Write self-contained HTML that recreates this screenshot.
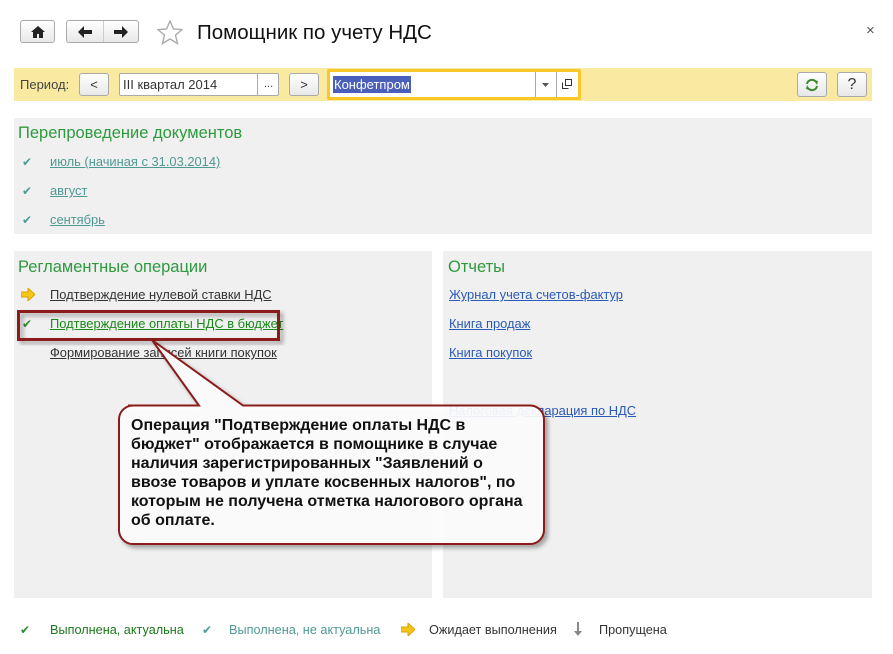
<!DOCTYPE html>
<html><head><meta charset="utf-8"><style>
*{margin:0;padding:0;box-sizing:border-box}
body{width:893px;height:654px;background:#fff;font-family:"Liberation Sans",Arial,sans-serif;position:relative;overflow:hidden;color:#333}
.a{position:absolute}
.btn{position:absolute;border:1px solid #aaa;border-radius:3px;background:linear-gradient(#fff,#e8e8e8);font-size:13px;text-align:center;color:#333}
.panel{position:absolute;background:#f0f0f0}
.h{position:absolute;font-size:16.5px;color:#2e9a3e}
.lnk{position:absolute;font-size:12.9px;text-decoration:underline;white-space:nowrap}
.gr{color:#4f9a94}
.f{font-size:12.7px;white-space:nowrap}
</style></head><body>
<div class="btn" style="left:20px;top:20px;width:35px;height:23px"><svg width="14" height="12" style="margin-top:5px" viewBox="0 0 14 12"><path d="M7 0L0 6h2v6h4V8h2v4h4V6h2z" fill="#222"/></svg></div>
<div class="btn" style="left:66px;top:20px;width:73px;height:23px"><div class="a" style="left:36px;top:0;width:1px;height:21px;background:#ccc"></div>
<svg class="a" style="left:11px;top:5px" width="14" height="12" viewBox="0 0 14 12"><path d="M0 6L6 0v4h8v4H6v4z" fill="#222"/></svg>
<svg class="a" style="left:47px;top:5px" width="14" height="12" viewBox="0 0 14 12"><path d="M14 6L8 0v4H0v4h8v4z" fill="#222"/></svg></div>
<svg class="a" style="left:157px;top:20px" width="26" height="25" viewBox="0 0 26 25"><path d="M13 1l3.5 8 8.5.6-6.5 5.5 2 8.4L13 19l-7.5 4.5 2-8.4L1 9.6 9.5 9z" fill="none" stroke="#aaa" stroke-width="1.4"/></svg>
<div class="a" style="left:197px;top:21px;font-size:20.5px;color:#111;white-space:nowrap">Помощник по учету НДС</div>
<div class="a" style="left:866px;top:22px;font-size:15px;color:#555">×</div>

<div class="a" style="left:14px;top:68px;width:858px;height:33px;background:#fae9a0"></div>
<div class="a" style="left:20px;top:77px;font-size:13px;color:#444">Период:</div>
<div class="btn" style="left:79px;top:73px;width:30px;height:23px;line-height:21px">&lt;</div>
<div class="a" style="left:119px;top:73px;width:160px;height:23px;background:#fff;border:1px solid #aaa;border-radius:2px;font-size:13px;padding:3px 3px;color:#333">III квартал 2014<div class="a" style="left:137px;top:0;width:1px;height:21px;background:#aaa"></div><div class="a" style="left:144px;top:4px;font-size:11px">...</div></div>
<div class="btn" style="left:289px;top:73px;width:30px;height:23px;line-height:21px">&gt;</div>
<div class="a" style="left:327px;top:69px;width:254px;height:31px;border:3px solid #f8c82a;background:#fff;border-radius:2px"></div>
<div class="a" style="left:333px;top:76px;height:17px;background:#4a5fba;color:#fff;font-size:13px;padding:1px 1px">Конфетпром</div>
<div class="a" style="left:535px;top:72px;width:1px;height:25px;background:#aaa"></div>
<div class="a" style="left:556px;top:72px;width:1px;height:25px;background:#aaa"></div>
<svg class="a" style="left:542px;top:83px" width="7" height="4"><path d="M0 0h7L3.5 4z" fill="#555"/></svg>
<svg class="a" style="left:562px;top:79px" width="10" height="10"><path d="M3.5.5h6v6h-6zM.5 3.5v6h6" fill="none" stroke="#333"/></svg>
<div class="btn" style="left:797px;top:72px;width:30px;height:25px"><svg width="16" height="16" style="margin-top:4px" viewBox="0 0 16 16"><path d="M3 7a5 5 0 0 1 9-2M13 9a5 5 0 0 1-9 2" fill="none" stroke="#3a8a2a" stroke-width="2"/><path d="M10 3l4 1-1 4zM6 13l-4-1 1-4z" fill="#3a8a2a"/></svg></div>
<div class="btn" style="left:837px;top:72px;width:30px;height:25px;line-height:23px;font-size:16px">?</div>

<div class="panel" style="left:14px;top:118px;width:858px;height:116px"></div>
<div class="h" style="left:18px;top:124px">Перепроведение документов</div>
<div class="a gr" style="left:22px;top:155px;font-size:12px">✔</div><div class="lnk gr" style="left:50px;top:154px">июль (начиная с 31.03.2014)</div>
<div class="a gr" style="left:22px;top:184px;font-size:12px">✔</div><div class="lnk gr" style="left:50px;top:183px">август</div>
<div class="a gr" style="left:22px;top:213px;font-size:12px">✔</div><div class="lnk gr" style="left:50px;top:212px">сентябрь</div>

<div class="panel" style="left:14px;top:251px;width:418px;height:347px"></div>
<div class="panel" style="left:443px;top:251px;width:429px;height:347px"></div>
<div class="h" style="left:18px;top:258px">Регламентные операции</div>
<svg class="a" style="left:21px;top:288px" width="14" height="13"><path d="M0 4h7V0l7 6.5L7 13V9H0z" fill="#f5c518" stroke="#d9a300"/></svg>
<div class="lnk" style="left:50px;top:287px;color:#333">Подтверждение нулевой ставки НДС</div>
<div class="a" style="left:22px;top:317px;font-size:12px;color:#2e8b2e">✔</div>
<div class="lnk" style="left:50px;top:316px;color:#1a8a1a">Подтверждение оплаты НДС в бюджет</div>
<div class="lnk" style="left:50px;top:345px;color:#333">Формирование записей книги покупок</div>
<div class="h" style="left:448px;top:258px">Отчеты</div>
<div class="lnk" style="left:449px;top:287px;color:#2a5ab8">Журнал учета счетов-фактур</div>
<div class="lnk" style="left:449px;top:316px;color:#2a5ab8">Книга продаж</div>
<div class="lnk" style="left:449px;top:345px;color:#2a5ab8">Книга покупок</div>
<div class="lnk" style="left:449px;top:403px;color:#2a5ab8">Налоговая декларация по НДС</div>

<svg class="a" style="left:0;top:0" width="893" height="654">
<defs><filter id="s" x="-10%" y="-10%" width="130%" height="130%"><feDropShadow dx="3" dy="3" stdDeviation="2" flood-opacity="0.35"/></filter></defs>
<rect x="18.5" y="311.5" width="260" height="28" fill="none" stroke="#8b1a1a" stroke-width="3" filter="url(#s)"/>
<path d="M128 405.5H199L152 340L243 405.5H530a14 14 0 0 1 14 14V530a14 14 0 0 1-14 14H133a14 14 0 0 1-14-14V419.5a14 14 0 0 1 14-14z" fill="#fff" fill-opacity="0.9" stroke="#8b1a1a" stroke-width="2" filter="url(#s)"/>
</svg>
<div class="a" style="left:131px;top:416px;font-size:16px;font-weight:bold;line-height:19px;color:#111;white-space:nowrap">Операция "Подтверждение оплаты НДС в<br>бюджет" отображается в помощнике в случае<br>наличия зарегистрированных "Заявлений о<br>ввозе товаров и уплате косвенных налогов", по<br>которым не получена отметка налогового органа<br>об оплате.</div>

<div class="a" style="left:20px;top:623px;font-size:12px;color:#2e8b2e">✔</div>
<div class="a f" style="left:50px;top:623px;color:#1a7a1a">Выполнена, актуальна</div>
<div class="a gr" style="left:202px;top:623px;font-size:12px">✔</div>
<div class="a gr f" style="left:229px;top:623px">Выполнена, не актуальна</div>
<svg class="a" style="left:401px;top:623px" width="14" height="13"><path d="M0 4h7V0l7 6.5L7 13V9H0z" fill="#f5c518" stroke="#d9a300"/></svg>
<div class="a f" style="left:429px;top:623px;color:#333">Ожидает выполнения</div>
<svg class="a" style="left:574px;top:622px" width="8" height="14"><path d="M3 0h2v9h3l-4 5-4-5h3z" fill="#888"/></svg>
<div class="a f" style="left:599px;top:623px;color:#333">Пропущена</div>
</body></html>
